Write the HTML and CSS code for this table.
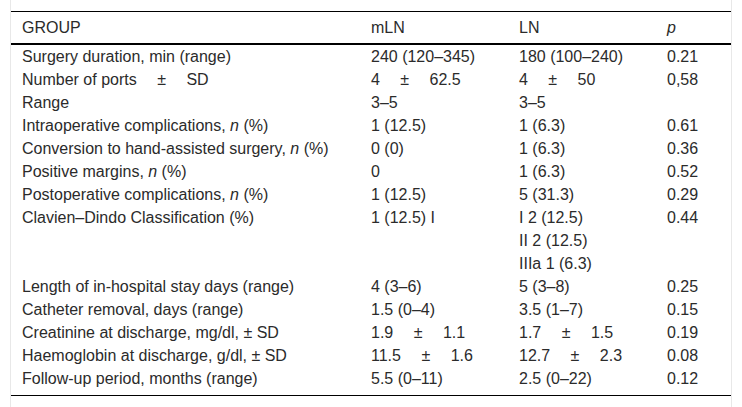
FILE: index.html
```html
<!DOCTYPE html>
<html lang="en">
<head>
<meta charset="utf-8">
<title>Outcomes table</title>
<link rel="stylesheet" href="styles.css">
</head>
<body>
<div class="frame">
  <table class="data">
    <colgroup>
      <col class="c-label">
      <col class="c-val">
      <col class="c-val">
      <col class="c-p">
    </colgroup>
    <thead>
      <tr>
        <th>GROUP</th>
        <th>mLN</th>
        <th>LN</th>
        <th><i>p</i></th>
      </tr>
    </thead>
    <tbody>
      <tr><td>Surgery duration, min (range)</td><td>240 (120–345)</td><td>180 (100–240)</td><td>0.21</td></tr>
      <tr><td>Number of ports &emsp;±&emsp; SD</td><td>4 &emsp;±&emsp; 62.5</td><td>4 &emsp;±&emsp; 50</td><td>0,58</td></tr>
      <tr><td>Range</td><td>3–5</td><td>3–5</td><td></td></tr>
      <tr><td>Intraoperative complications, <i>n</i> (%)</td><td>1 (12.5)</td><td>1 (6.3)</td><td>0.61</td></tr>
      <tr><td>Conversion to hand-assisted surgery, <i>n</i> (%)</td><td>0 (0)</td><td>1 (6.3)</td><td>0.36</td></tr>
      <tr><td>Positive margins, <i>n</i> (%)</td><td>0</td><td>1 (6.3)</td><td>0.52</td></tr>
      <tr><td>Postoperative complications, <i>n</i> (%)</td><td>1 (12.5)</td><td>5 (31.3)</td><td>0.29</td></tr>
      <tr><td>Clavien–Dindo Classification (%)</td><td>1 (12.5) I</td><td>I 2 (12.5)<br>II 2 (12.5)<br>IIIa 1 (6.3)</td><td>0.44</td></tr>
      <tr><td>Length of in-hospital stay days (range)</td><td>4 (3–6)</td><td>5 (3–8)</td><td>0.25</td></tr>
      <tr><td>Catheter removal, days (range)</td><td>1.5 (0–4)</td><td>3.5 (1–7)</td><td>0.15</td></tr>
      <tr><td>Creatinine at discharge, mg/dl, ± SD</td><td>1.9 &emsp;±&emsp; 1.1</td><td>1.7 &emsp;±&emsp; 1.5</td><td>0.19</td></tr>
      <tr><td>Haemoglobin at discharge, g/dl, ± SD</td><td>11.5 &emsp;±&emsp; 1.6</td><td>12.7 &emsp;±&emsp; 2.3</td><td>0.08</td></tr>
      <tr class="last"><td>Follow-up period, months (range)</td><td>5.5 (0–11)</td><td>2.5 (0–22)</td><td>0.12</td></tr>
    </tbody>
  </table>
</div>
</body>
</html>
```
FILE: styles.css
```css
html, body {
  margin: 0;
  padding: 0;
  background: #fff;
}

body {
  font-family: "Liberation Sans", Arial, sans-serif;
  font-size: 16px;
  line-height: 23px;
  color: #2b2b2b;
}

.frame {
  margin: 0 10px;
  min-height: 407px;
  box-sizing: border-box;
  padding-top: 11px;
  border-left: 1px solid #e8e8e8;
  border-right: 1px solid #e8e8e8;
}

.data {
  width: 100%;
  table-layout: fixed;
  border-collapse: collapse;
  border-top: 1px solid #000;
  border-bottom: 1px solid #000;
}

.c-label { width: 349px; }
.c-val { width: 148px; }
.c-p { width: 75px; }

.data th {
  text-align: left;
  font-weight: normal;
  padding: 4px 0 4px 11px;
  border-bottom: 2px solid #000;
}

.data td {
  padding: 0 0 0 11px;
  vertical-align: top;
  white-space: nowrap;
}

.data tr.last td {
  padding-bottom: 5px;
}
```
